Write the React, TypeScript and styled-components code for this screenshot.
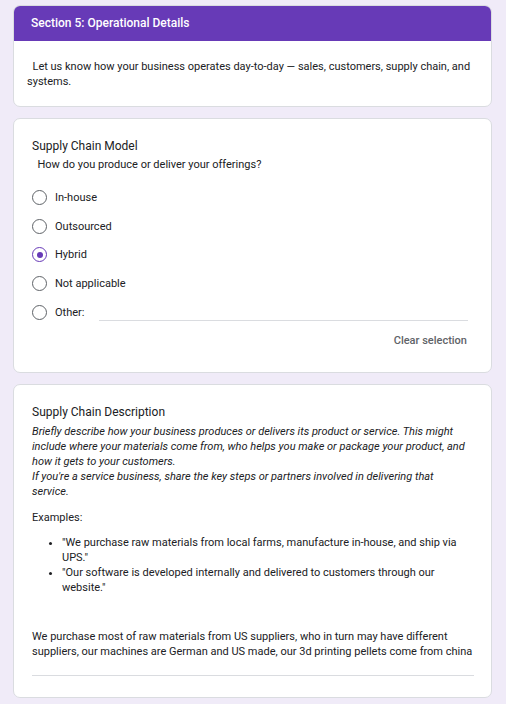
import React from 'react';
import styled, {createGlobalStyle} from 'styled-components';

const GlobalStyle = createGlobalStyle`
  html, body {
    margin: 0;
    padding: 0;
    background: #f0ebf8;
  }
  body {
    font-family: Roboto, "Liberation Sans", Arial, sans-serif;
    color: #202124;
  }
`;

const options = ['In-house', 'Outsourced', 'Hybrid', 'Not applicable'];
const selected = 'Hybrid';

const App = () => {
    return <Page>
        <GlobalStyle/>
        <Card>
            <SectionHeader>Section 5: Operational Details</SectionHeader>
            <SectionBody>
                {'  Let us know how your business operates day-to-day \u2014 sales, customers, supply chain, and systems.'}
            </SectionBody>
        </Card>

        <Card>
            <Question>
                <QuestionTitle>Supply Chain Model</QuestionTitle>
                <QuestionHelp>{'  How do you produce or deliver your offerings?'}</QuestionHelp>
                <RadioList>
                    {options.map(opt => (
                        <RadioRow key={opt}>
                            <Radio checked={opt === selected}/>
                            <RadioLabel>{opt}</RadioLabel>
                        </RadioRow>
                    ))}
                    <RadioRow>
                        <Radio checked={false}/>
                        <RadioLabel>Other:</RadioLabel>
                        <OtherInput/>
                    </RadioRow>
                </RadioList>
                <ClearRow>
                    <ClearButton>Clear selection</ClearButton>
                </ClearRow>
            </Question>
        </Card>

        <Card>
            <Question pad="18px 17px 21px 18px">
                <QuestionTitle>Supply Chain Description</QuestionTitle>
                <Italic>
                    Briefly describe how your business produces or delivers its product or service. This might
                    include where your materials come from, who helps you make or package your product, and
                    how it gets to your customers.
                    <br/>
                    If you're a service business, share the key steps or partners involved in delivering that
                    service.
                </Italic>
                <Examples>Examples:</Examples>
                <Bullets>
                    <li>"We purchase raw materials from local farms, manufacture in-house, and ship via UPS."</li>
                    <li>"Our software is developed internally and delivered to customers through our website."</li>
                </Bullets>
                <Answer>
                    We purchase most of raw materials from US suppliers, who in turn may have different
                    suppliers, our machines are German and US made, our 3d printing pellets come from china
                </Answer>
            </Question>
        </Card>
    </Page>;
};

const Page = styled.div`
  display: flex;
  flex-direction: column;
  gap: 11px;
  padding: 5px 14px 0 13px;
`;

const Card = styled.div`
  background: #fff;
  border: 1px solid #dadce0;
  border-radius: 7px;
  overflow: hidden;
`;

const SectionHeader = styled.div`
  background: #673ab7;
  color: #fff;
  height: 36px;
  margin: -1px -1px 0;
  padding: 0 0 0 18px;
  display: flex;
  align-items: center;
  font-size: 12px;
  font-weight: 500;
`;

const SectionBody = styled.div`
  padding: 18px 20px 17px 13px;
  font-size: 11px;
  line-height: 15px;
  white-space: pre-wrap;
`;

const Question = styled.div<{pad?: string}>`
  padding: ${p => p.pad || '18px 24px 24px 18px'};
  display: flex;
  flex-direction: column;
`;

const QuestionTitle = styled.div`
  font-size: 12px;
  line-height: 18px;
`;

const QuestionHelp = styled.div`
  margin-top: 2px;
  font-size: 11px;
  line-height: 15px;
  white-space: pre-wrap;
`;

const RadioList = styled.div`
  margin-top: 11px;
  display: flex;
  flex-direction: column;
`;

const RadioRow = styled.div`
  height: 28.75px;
  display: flex;
  align-items: center;
`;

const Radio = styled.span<{checked: boolean}>`
  box-sizing: border-box;
  width: 15px;
  height: 15px;
  border-radius: 50%;
  border: 1.5px solid ${p => p.checked ? '#673ab7' : '#5f6368'};
  display: flex;
  align-items: center;
  justify-content: center;
  flex-shrink: 0;
  &::after {
    content: '';
    display: ${p => p.checked ? 'block' : 'none'};
    width: 6px;
    height: 6px;
    border-radius: 50%;
    background: #673ab7;
  }
`;

const RadioLabel = styled.span`
  margin-left: 8px;
  font-size: 11px;
`;

const OtherInput = styled.div`
  flex: 1;
  margin-left: 15px;
  margin-right: -1px;
  align-self: flex-end;
  margin-bottom: 6px;
  border-bottom: 1px solid #dadce0;
`;

const ClearRow = styled.div`
  margin-top: 6px;
  display: flex;
  justify-content: flex-end;
`;

const ClearButton = styled.span`
  font-size: 11px;
  line-height: 15px;
  font-weight: 500;
  color: #5f6368;
`;

const Italic = styled.div`
  margin-top: 3px;
  margin-right: 5px;
  font-size: 11px;
  line-height: 15px;
  font-style: italic;
`;

const Examples = styled.div`
  margin-top: 11px;
  font-size: 11px;
  line-height: 15px;
`;

const Bullets = styled.ul`
  margin: 10px 0 0;
  padding-left: 30px;
  font-size: 11px;
  line-height: 15px;
`;

const Answer = styled.div`
  margin-top: 34px;
  padding-bottom: 16px;
  border-bottom: 1px solid #dadce0;
  font-size: 11px;
  line-height: 15px;
`;

export default App;
